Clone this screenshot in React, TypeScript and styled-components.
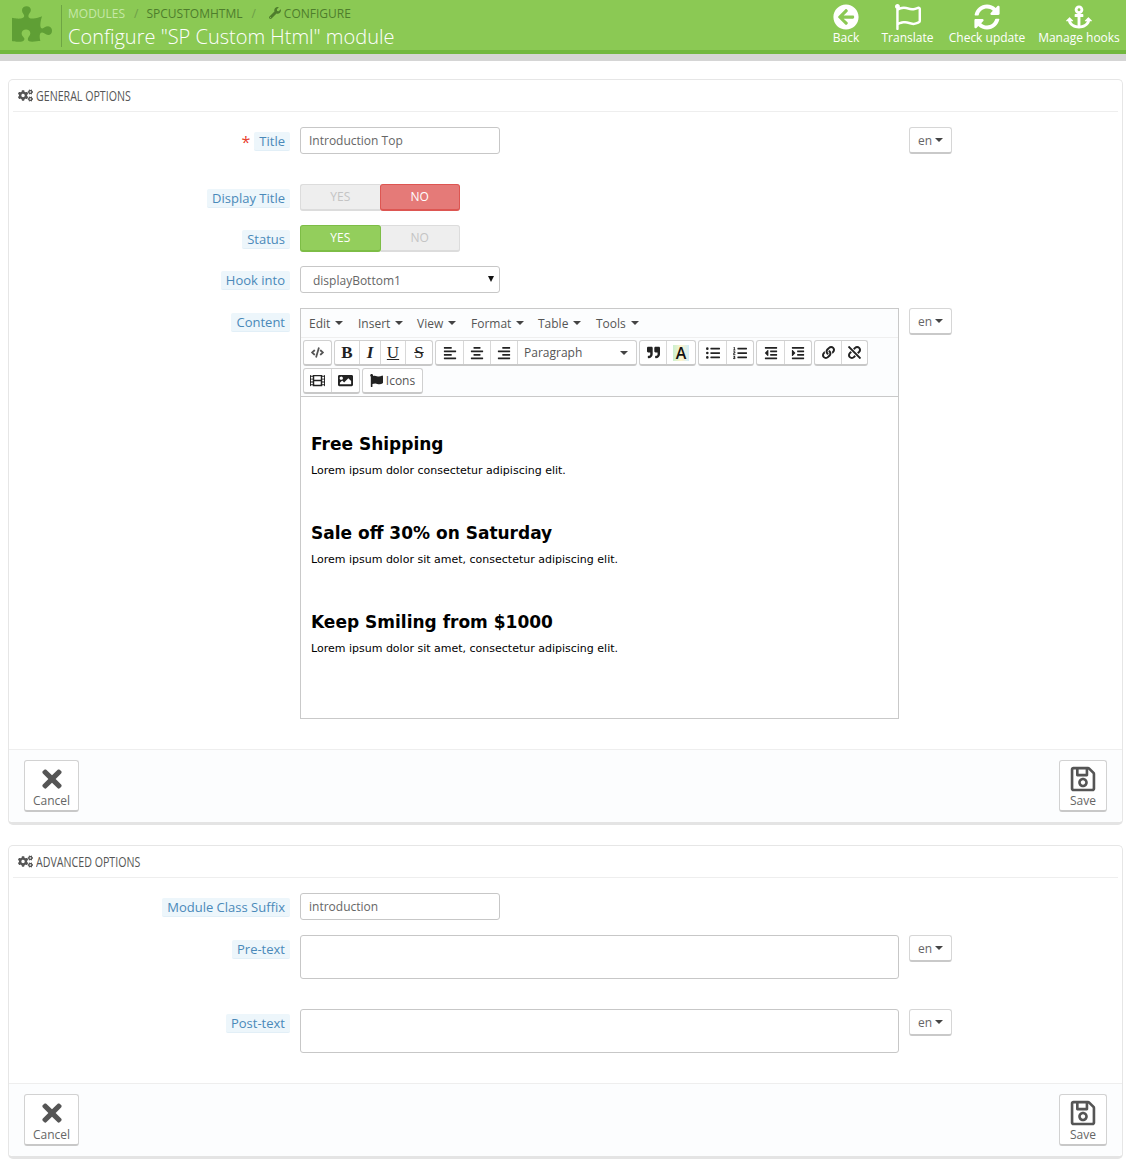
import React from "react";
import styled, { createGlobalStyle } from "styled-components";
import {
  FaPuzzlePiece, FaWrench, FaCogs, FaArrowCircleLeft, FaRegFlag, FaSyncAlt, FaAnchor, FaTimes, FaRegSave,
  FaFlag, FaAlignLeft, FaAlignCenter, FaAlignRight, FaQuoteRight, FaListUl, FaListOl, FaOutdent, FaIndent,
  FaLink, FaUnlink, FaFilm, FaImage, FaCode,
} from "react-icons/fa";

const Global = createGlobalStyle`
  html, body { margin: 0; padding: 0; background: #fff; }
  body { font-family: "Open Sans", "Liberation Sans", sans-serif; font-size: 12px; color: #555; }
  * { box-sizing: border-box; }
`;

const Page = styled.div`
  width: 1126px;
  height: 1161px;
  overflow: hidden;
`;
const Header = styled.header`
  height: 54px;
  background: #8bc954;
  border-bottom: 4px solid #72b83f;
  display: flex;
  justify-content: space-between;
`;
const HeaderGrey = styled.div`
  height: 7px;
  background: #d5d5d5;
`;
const Brand = styled.div`
  display: flex;
  color: #5f9f35;
  padding: 4px 0 0 12px;
`;
const Divider = styled.div`
  width: 1px;
  height: 42px;
  margin: 1px 6px 0 9px;
  background: #6ea544;
`;
const Crumbs = styled.div`
  display: flex;
  align-items: center;
  gap: 8px;
  height: 18px;
  margin-top: 0;
  font-size: 12px;
  text-transform: uppercase;
  color: #4e7d2c;
`;
const CrumbLight = styled.span`
  color: #c6e8a8;
`;
const CrumbSep = styled.span`
  color: #6d9e48;
  margin: 0 0 0 1px;
`;
const CrumbIcon = styled.span`
  display: inline-flex;
  align-items: center;
  gap: 3px;
  margin-left: 5px;
`;
const PageTitle = styled.h1`
  margin: 1px 0 0;
  font-size: 20px;
  line-height: 27px;
  font-weight: 300;
  color: #fff;
  white-space: nowrap;
`;
const Tools = styled.div`
  display: flex;
  padding-top: 4px;
  margin-right: 1px;
`;
const Tool = styled.a<{ $w: number }>`
  width: ${(p) => p.$w}px;
  display: flex;
  flex-direction: column;
  align-items: center;
  color: #fff;
  font-size: 12px;
  line-height: 16px;
  white-space: nowrap;
`;
const ToolIcon = styled.span`
  height: 26px;
  font-size: 26px;
  line-height: 26px;
  margin-bottom: 0;
  display: flex;
`;
const Panel = styled.section<{ $mt: number }>`
  margin: ${(p) => p.$mt}px 3px 0 8px;
  border: 1px solid #e6e6e6;
  border-bottom: 3px solid #e4e4e4;
  border-radius: 5px;
  padding: 0;
  background: #fff;
`;
const PanelHead = styled.div`
  margin: 0 4px;
  height: 32px;
  padding: 0 5px;
  border-bottom: 1px solid #eee;
  display: flex;
  align-items: center;
  gap: 3px;
  font-size: 14px;
  color: #555;
  text-transform: uppercase;
`;
const HeadText = styled.span`
  display: inline-block;
  transform: scaleX(0.76);
  transform-origin: left center;
  white-space: nowrap;
`;
const Row = styled.div<{ $mt: number }>`
  display: grid;
  grid-template-columns: 281px 599px 43px;
  column-gap: 10px;
  margin-top: ${(p) => p.$mt}px;
  align-items: start;
`;
const LabelCell = styled.div<{ $top?: number }>`
  display: flex;
  justify-content: flex-end;
  align-items: center;
  gap: 4px;
  padding-top: ${(p) => p.$top ?? 5}px;
`;
const Req = styled.span`
  color: #e8412f;
  font-size: 16px;
  line-height: 16px;
  margin-right: 0;
`;
const Label = styled.label`
  display: inline-block;
  padding: 0 5px;
  height: 19px;
  line-height: 19px;
  font-size: 13px;
  color: #4a89b9;
  background: #edf6fb;
  border-radius: 2px;
  border-bottom: 1px solid #e2eff7;
`;
const TextInput = styled.input`
  display: block;
  width: 200px;
  height: 27px;
  padding: 0 8px;
  border: 1px solid #c7c7c7;
  border-radius: 3px;
  background: #fff;
  font: 12px "Open Sans", sans-serif;
  color: #666;
`;
const LangBtn = styled.button`
  width: 43px;
  height: 27px;
  padding: 0;
  border: 1px solid #d6d6d6;
  border-bottom: 2px solid #c9c9c9;
  border-radius: 3px;
  background: #fff;
  font: 12px "Open Sans", sans-serif;
  color: #666;
  display: flex;
  align-items: center;
  justify-content: center;
  gap: 3px;
`;
const Caret = styled.span<{ $mb?: number }>`
  display: inline-block;
  width: 0;
  height: 0;
  border: 4px solid transparent;
  border-top-color: #444;
  border-bottom: 0;
  margin-bottom: ${(p) => p.$mb ?? 0}px;
`;
const Switch = styled.div`
  display: flex;
  width: 160px;
  height: 27px;
  border-radius: 3px;
  background: #eee;
`;
const Option = styled.span<{ $on?: "yes" | "no"; $side: "l" | "r" }>`
  flex: 1;
  display: flex;
  align-items: center;
  justify-content: center;
  padding-bottom: 2px;
  font-size: 12px;
  color: ${(p) => (p.$on ? "#fff" : "#c4c4c4")};
  background: ${(p) => (p.$on === "yes" ? "#93ce5c" : p.$on === "no" ? "#e57a78" : "#eee")};
  border: 1px solid ${(p) => (p.$on === "yes" ? "#7dbd46" : p.$on === "no" ? "#dd5652" : "#dcdcdc")};
  border-bottom-width: 2px;
  border-radius: ${(p) => (p.$side === "l" ? "3px 0 0 3px" : "0 3px 3px 0")};
  ${(p) => (p.$on ? "border-radius: 3px;" : "")}
  ${(p) => (!p.$on && p.$side === "l" ? "border-right: 0;" : "")}
  ${(p) => (!p.$on && p.$side === "r" ? "border-left: 0;" : "")}
`;
const SelectBox = styled.div`
  position: relative;
  width: 200px;
  height: 27px;
  padding: 0 12px;
  line-height: 27px;
  border: 1px solid #c7c7c7;
  border-radius: 3px;
  background: #fff;
  color: #666;
`;
const SelectArrow = styled.span`
  position: absolute;
  right: 5px;
  top: 9px;
  width: 0;
  height: 0;
  border-left: 3.5px solid transparent;
  border-right: 3.5px solid transparent;
  border-top: 6px solid #111;
`;
const Editor = styled.div`
  width: 599px;
  height: 411px;
  border: 1px solid #c9c9c9;
  display: flex;
  flex-direction: column;
  background: #fff;
`;
const Chrome = styled.div`
  height: 88px;
  background: #fcfdfe;
  border-bottom: 1px solid #c9c9c9;
`;
const MenuBar = styled.div`
  height: 29px;
  display: flex;
  align-items: center;
  padding: 0 0 0 8px;
  border-bottom: 1px solid #efefef;
`;
const MenuItem = styled.span<{ $w: number }>`
  width: ${(p) => p.$w}px;
  display: flex;
  align-items: center;
  gap: 5px;
  font-size: 12px;
  color: #555;
`;
const ToolRow = styled.div<{ $mt: number; $gap: number }>`
  display: flex;
  gap: ${(p) => p.$gap}px;
  margin: ${(p) => p.$mt}px 0 0 2px;
`;
const BtnGroup = styled.div`
  display: flex;
  height: 26px;
  border: 1px solid #d0d0d0;
  border-bottom: 2px solid #c8c8c8;
  border-radius: 3px;
  background: #fff;
`;
const ToolBtn = styled.span<{ $w: number }>`
  width: ${(p) => p.$w}px;
  display: flex;
  align-items: center;
  justify-content: center;
  gap: 3px;
  font-size: 12px;
  color: #222;
  border-left: 1px solid #d8d8d8;
  &:first-child { border-left: 0; }
`;
const Letter = styled.span<{ $b?: boolean; $i?: boolean; $u?: boolean; $s?: boolean }>`
  font-family: "Liberation Serif", serif;
  font-size: 17px;
  line-height: 20px;
  font-weight: ${(p) => (p.$b ? 700 : 400)};
  font-style: ${(p) => (p.$i ? "italic" : "normal")};
  text-decoration: ${(p) => (p.$u ? "underline" : p.$s ? "line-through" : "none")};
  color: #222;
`;
const ColorA = styled.span`
  width: 16px;
  height: 16px;
  display: flex;
  align-items: center;
  justify-content: center;
  font-size: 16px;
  font-weight: 600;
  color: #111;
  background: linear-gradient(90deg, #c9f0cf 0%, #fff3c9 50%, #cfeefb 100%);
`;
const ParaLabel = styled.span`
  flex: 1;
  display: flex;
  align-items: center;
  justify-content: space-between;
  padding: 0 8px 0 6px;
  color: #555;
  border-left: 1px solid #d8d8d8;
  font-size: 12px;
`;
const IconsLabel = styled.span`
  color: #555;
`;
const Content = styled.div`
  flex: 1;
  padding: 36px 10px 0;
  font-family: "DejaVu Sans", Verdana, sans-serif;
  color: #000;
`;
const H = styled.h2`
  margin: 0;
  height: 22px;
  line-height: 22px;
  font-size: 17px;
  font-weight: 700;
`;
const P = styled.p`
  margin: 8px 0 43px;
  height: 16px;
  line-height: 16px;
  font-size: 11px;
`;
const TextArea = styled.textarea`
  display: block;
  width: 599px;
  height: 44px;
  resize: none;
  border: 1px solid #c7c7c7;
  border-radius: 3px;
  background: #fff;
`;
const Footer = styled.div<{ $mt: number }>`
  margin-top: ${(p) => p.$mt}px;
  height: 73px;
  padding: 10px 15px 0;
  background: #fcfdfe;
  border-top: 1px solid #eee;
  border-radius: 0 0 5px 5px;
  display: flex;
  justify-content: space-between;
  align-items: flex-start;
`;
const ActionBtn = styled.button<{ $w: number }>`
  width: ${(p) => p.$w}px;
  height: 52px;
  padding: 4px 0 0;
  border: 1px solid #d2d2d2;
  border-bottom: 2px solid #c8c8c8;
  border-radius: 3px;
  background: #fff;
  display: flex;
  flex-direction: column;
  align-items: center;
  font: 12px "Open Sans", sans-serif;
  color: #666;
  line-height: 16px;
  & > svg { width: 28px; height: 28px; color: #555; margin-bottom: 0; }
`;
const LangCell = styled.div``;

const Lang = () => (
  <LangBtn type="button">en <Caret /></LangBtn>
);

const Actions = ({ mt }: { mt: number }) => (
  <Footer $mt={mt}>
    <ActionBtn type="button" $w={55}><FaTimes />Cancel</ActionBtn>
    <ActionBtn type="button" $w={48}><FaRegSave />Save</ActionBtn>
  </Footer>
);

const menu: [string, number][] = [["Edit", 49], ["Insert", 59], ["View", 54], ["Format", 67], ["Table", 58], ["Tools", 60]];

export default function App() {
  return (
    <Page>
      <Global />
      <Header>
        <Brand>
          <FaPuzzlePiece size={40} />
          <Divider />
          <div>
            <Crumbs>
              <CrumbLight>Modules</CrumbLight>
              <CrumbSep>/</CrumbSep>
              <span>SPCustomHtml</span>
              <CrumbSep>/</CrumbSep>
              <CrumbIcon><FaWrench size={12} />Configure</CrumbIcon>
            </Crumbs>
            <PageTitle>Configure "SP Custom Html" module</PageTitle>
          </div>
        </Brand>
        <Tools>
          <Tool $w={56}><ToolIcon><FaArrowCircleLeft /></ToolIcon>Back</Tool>
          <Tool $w={67}><ToolIcon><FaRegFlag /></ToolIcon>Translate</Tool>
          <Tool $w={92}><ToolIcon><FaSyncAlt /></ToolIcon>Check update</Tool>
          <Tool $w={92}><ToolIcon><FaAnchor /></ToolIcon>Manage hooks</Tool>
        </Tools>
      </Header>
      <HeaderGrey />

      <Panel $mt={18}>
        <PanelHead><FaCogs size={15} /><HeadText>General options</HeadText></PanelHead>
        <Row $mt={15}>
          <LabelCell><Req>*</Req><Label>Title</Label></LabelCell>
          <TextInput defaultValue="Introduction Top" />
          <Lang />
        </Row>
        <Row $mt={30}>
          <LabelCell><Label>Display Title</Label></LabelCell>
          <Switch><Option $side="l">YES</Option><Option $side="r" $on="no">NO</Option></Switch>
        </Row>
        <Row $mt={14}>
          <LabelCell><Label>Status</Label></LabelCell>
          <Switch><Option $side="l" $on="yes">YES</Option><Option $side="r">NO</Option></Switch>
        </Row>
        <Row $mt={14}>
          <LabelCell><Label>Hook into</Label></LabelCell>
          <SelectBox>displayBottom1<SelectArrow /></SelectBox>
        </Row>
        <Row $mt={15}>
          <LabelCell><Label>Content</Label></LabelCell>
          <Editor>
            <Chrome>
              <MenuBar>
                {menu.map(([m, w]) => (
                  <MenuItem key={m} $w={w}>{m}<Caret /></MenuItem>
                ))}
              </MenuBar>
              <ToolRow $mt={2} $gap={2}>
                <BtnGroup><ToolBtn $w={27}><FaCode size={13} color="#555" /></ToolBtn></BtnGroup>
                <BtnGroup>
                  <ToolBtn $w={24}><Letter $b>B</Letter></ToolBtn>
                  <ToolBtn $w={21}><Letter $i $b>I</Letter></ToolBtn>
                  <ToolBtn $w={25}><Letter $u>U</Letter></ToolBtn>
                  <ToolBtn $w={27}><Letter $s>S</Letter></ToolBtn>
                </BtnGroup>
                <BtnGroup>
                  <ToolBtn $w={27}><FaAlignLeft size={14} /></ToolBtn>
                  <ToolBtn $w={27}><FaAlignCenter size={14} /></ToolBtn>
                  <ToolBtn $w={27}><FaAlignRight size={14} /></ToolBtn>
                  <ParaLabel style={{ width: 119, flex: "none" }}>Paragraph<Caret /></ParaLabel>
                </BtnGroup>
                <BtnGroup>
                  <ToolBtn $w={26}><FaQuoteRight size={13} /></ToolBtn>
                  <ToolBtn $w={29}><ColorA>A</ColorA></ToolBtn>
                </BtnGroup>
                <BtnGroup>
                  <ToolBtn $w={27}><FaListUl size={14} /></ToolBtn>
                  <ToolBtn $w={27}><FaListOl size={14} /></ToolBtn>
                </BtnGroup>
                <BtnGroup>
                  <ToolBtn $w={27}><FaOutdent size={14} /></ToolBtn>
                  <ToolBtn $w={27}><FaIndent size={14} /></ToolBtn>
                </BtnGroup>
                <BtnGroup>
                  <ToolBtn $w={26}><FaLink size={13} /></ToolBtn>
                  <ToolBtn $w={26}><FaUnlink size={13} /></ToolBtn>
                </BtnGroup>
              </ToolRow>
              <ToolRow $mt={2} $gap={2}>
                <BtnGroup>
                  <ToolBtn $w={27}><FaFilm size={15} /></ToolBtn>
                  <ToolBtn $w={28}><FaImage size={15} /></ToolBtn>
                </BtnGroup>
                <BtnGroup>
                  <ToolBtn $w={59}><FaFlag size={13} /><IconsLabel>Icons</IconsLabel></ToolBtn>
                </BtnGroup>
              </ToolRow>
            </Chrome>
            <Content>
              <H>Free Shipping</H>
              <P>Lorem ipsum dolor consectetur adipiscing elit.</P>
              <H>Sale off 30% on Saturday</H>
              <P>Lorem ipsum dolor sit amet, consectetur adipiscing elit.</P>
              <H>Keep Smiling from $1000</H>
              <P>Lorem ipsum dolor sit amet, consectetur adipiscing elit.</P>
            </Content>
          </Editor>
          <LangCell><Lang /></LangCell>
        </Row>
        <Actions mt={30} />
      </Panel>

      <Panel $mt={20}>
        <PanelHead><FaCogs size={15} /><HeadText>Advanced options</HeadText></PanelHead>
        <Row $mt={15}>
          <LabelCell><Label>Module Class Suffix</Label></LabelCell>
          <TextInput defaultValue="introduction" />
        </Row>
        <Row $mt={15}>
          <LabelCell><Label>Pre-text</Label></LabelCell>
          <TextArea />
          <Lang />
        </Row>
        <Row $mt={30}>
          <LabelCell><Label>Post-text</Label></LabelCell>
          <TextArea />
          <Lang />
        </Row>
        <Actions mt={30} />
      </Panel>
    </Page>
  );
}
